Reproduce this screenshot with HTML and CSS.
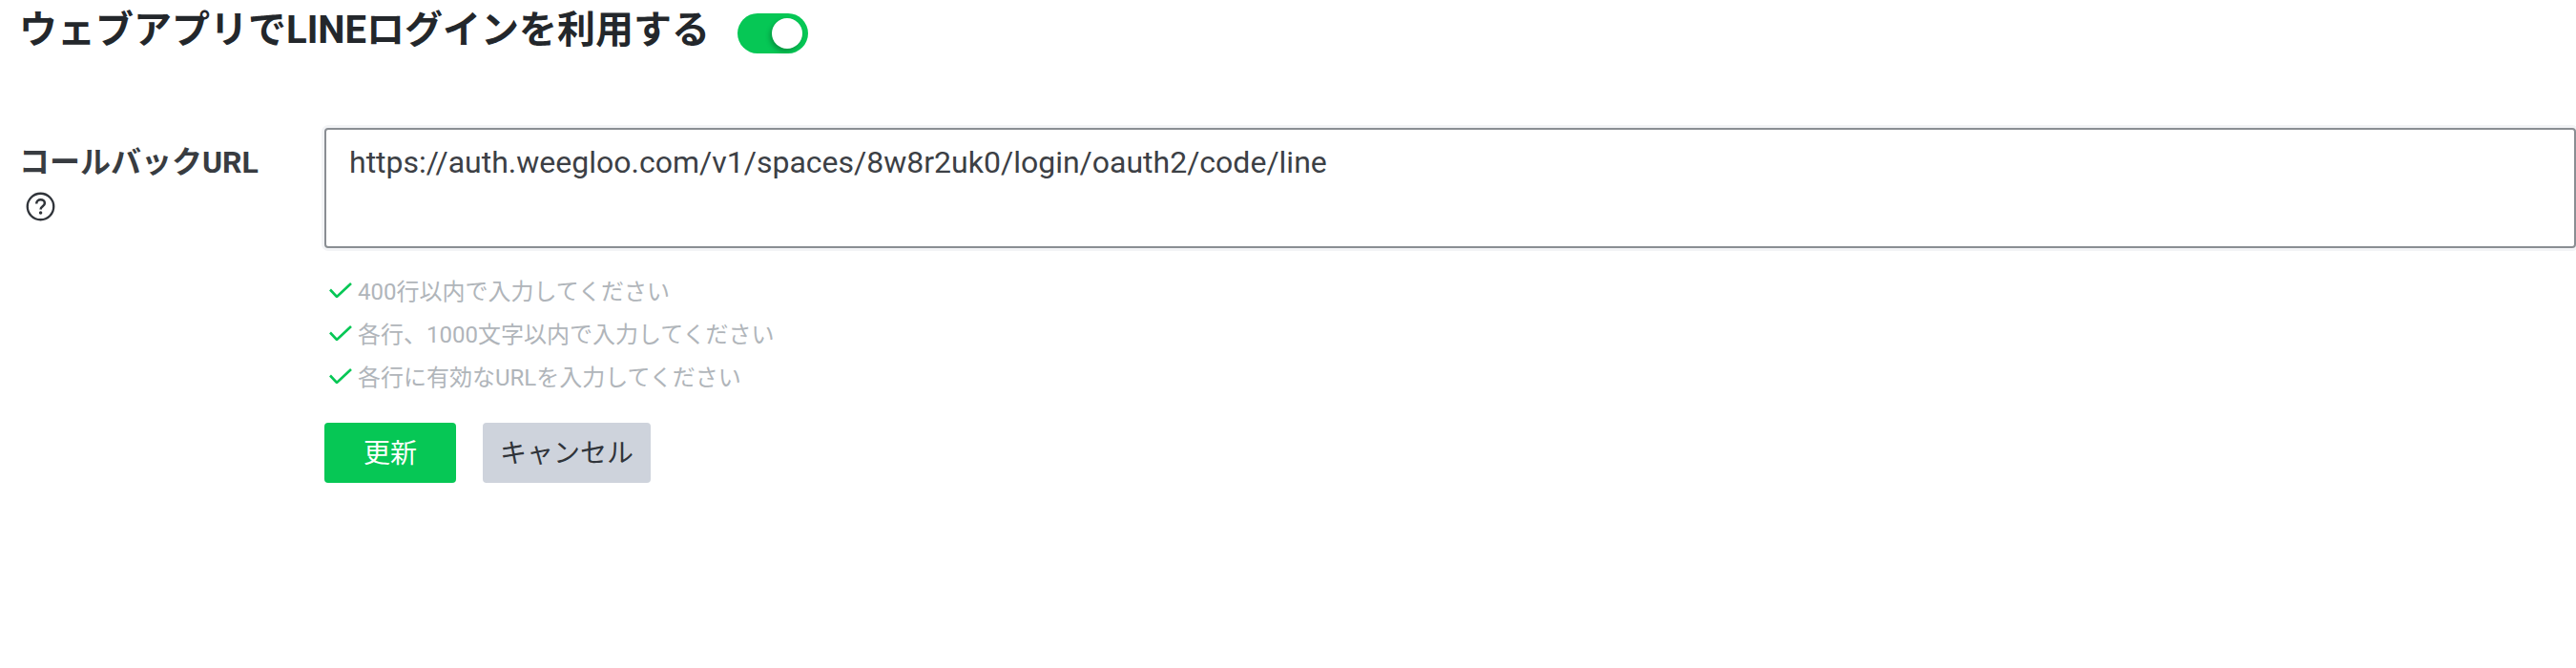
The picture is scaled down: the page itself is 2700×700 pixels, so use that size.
FILE: index.html
```html
<!DOCTYPE html>
<html lang="ja">
<head>
    <meta charset="UTF-8">
    <title>LINEログイン設定</title>
    <link rel="stylesheet" href="styles.css">
</head>
<body>
    <div class="title-row">
        <h1 class="title">ウェブアプリでLINEログインを利用する</h1>
        <div class="toggle"><span class="toggle-knob"></span></div>
    </div>
    <div class="form-row">
        <div class="form-label">
            <label for="callback-url">コールバックURL</label>
            <svg class="help-icon" viewBox="0 0 32 32" width="31" height="31">
                <circle cx="16" cy="16" r="14.2" fill="none" stroke="#30343a" stroke-width="2.4"/>
                <path d="M11.6 12.8c0-2.6 2-4.2 4.5-4.2s4.4 1.5 4.4 3.8c0 3.4-4.4 3.4-4.4 6.6" fill="none" stroke="#30343a" stroke-width="2.6"/>
                <circle cx="16.1" cy="22.8" r="1.8" fill="#30343a"/>
            </svg>
        </div>
        <div class="form-body">
            <textarea id="callback-url" class="url-input">https://auth.weegloo.com/v1/spaces/8w8r2uk0/login/oauth2/code/line</textarea>
            <ul class="hints">
                <li class="hint">
                    <svg class="check" viewBox="0 0 24 16" width="24" height="16"><path d="M1 7.5l7 7.5L23 1" fill="none" stroke="#06c755" stroke-width="2.6"/></svg>
                    400行以内で入力してください
                </li>
                <li class="hint">
                    <svg class="check" viewBox="0 0 24 16" width="24" height="16"><path d="M1 7.5l7 7.5L23 1" fill="none" stroke="#06c755" stroke-width="2.6"/></svg>
                    各行、1000文字以内で入力してください
                </li>
                <li class="hint">
                    <svg class="check" viewBox="0 0 24 16" width="24" height="16"><path d="M1 7.5l7 7.5L23 1" fill="none" stroke="#06c755" stroke-width="2.6"/></svg>
                    各行に有効なURLを入力してください
                </li>
            </ul>
            <div class="actions">
                <button class="btn btn-primary">更新</button>
                <button class="btn btn-cancel">キャンセル</button>
            </div>
        </div>
    </div>
</body>
</html>
```

FILE: styles.css
```css
* {
    box-sizing: border-box;
}
body {
    margin: 0;
    background-color: #fff;
    font-family: Roboto, "Noto Sans CJK JP", sans-serif;
    color: #383c41;
}
.title-row {
    display: flex;
    align-items: center;
    height: 70px;
    padding-left: 20px;
    gap: 29px;
}
.title {
    margin: 0 0 6px;
    font-size: 40px;
    line-height: 64px;
    font-weight: 700;
    color: #23272b;
}
.toggle {
    display: flex;
    align-items: center;
    justify-content: flex-end;
    width: 74px;
    height: 42px;
    padding-right: 6px;
    border-radius: 21px;
    background-color: #06c755;
}
.toggle-knob {
    width: 32px;
    height: 32px;
    border-radius: 50%;
    background-color: #fff;
    box-shadow: -2px 3px 5px rgba(0,0,0,0.25);
}
.form-row {
    display: flex;
    margin-top: 64px;
}
.form-label {
    width: 340px;
    padding: 12px 0 0 20px;
    font-size: 32px;
    font-weight: 700;
    line-height: 48px;
}
.help-icon {
    display: block;
    margin: 7px 0 0 7px;
}
.form-body {
    width: 2360px;
}
.url-input {
    display: block;
    width: 100%;
    height: 126px;
    padding: 12px 24px;
    border: 2px solid #8a8e93;
    border-radius: 4px;
    box-shadow: 0 0 0 3px #f3f4f6;
    outline: none;
    resize: none;
    font-family: inherit;
    font-size: 32px;
    line-height: 44px;
    color: #3c4045;
}
.hints {
    margin: 21px 0 0;
    padding: 0;
    list-style: none;
}
.hint {
    display: flex;
    align-items: center;
    gap: 6px;
    height: 45px;
    padding-left: 5px;
    font-size: 24px;
    color: #b0b5ba;
}
.actions {
    display: flex;
    gap: 28px;
    margin-top: 27px;
}
.btn {
    height: 63px;
    padding-bottom: 5px;
    border: none;
    border-radius: 4px;
    font-family: inherit;
    font-size: 28px;
    cursor: pointer;
}
.btn-primary {
    width: 138px;
    background-color: #06c755;
    color: #fff;
}
.btn-cancel {
    width: 176px;
    background-color: #ced3dc;
    color: #30343a;
}
```
